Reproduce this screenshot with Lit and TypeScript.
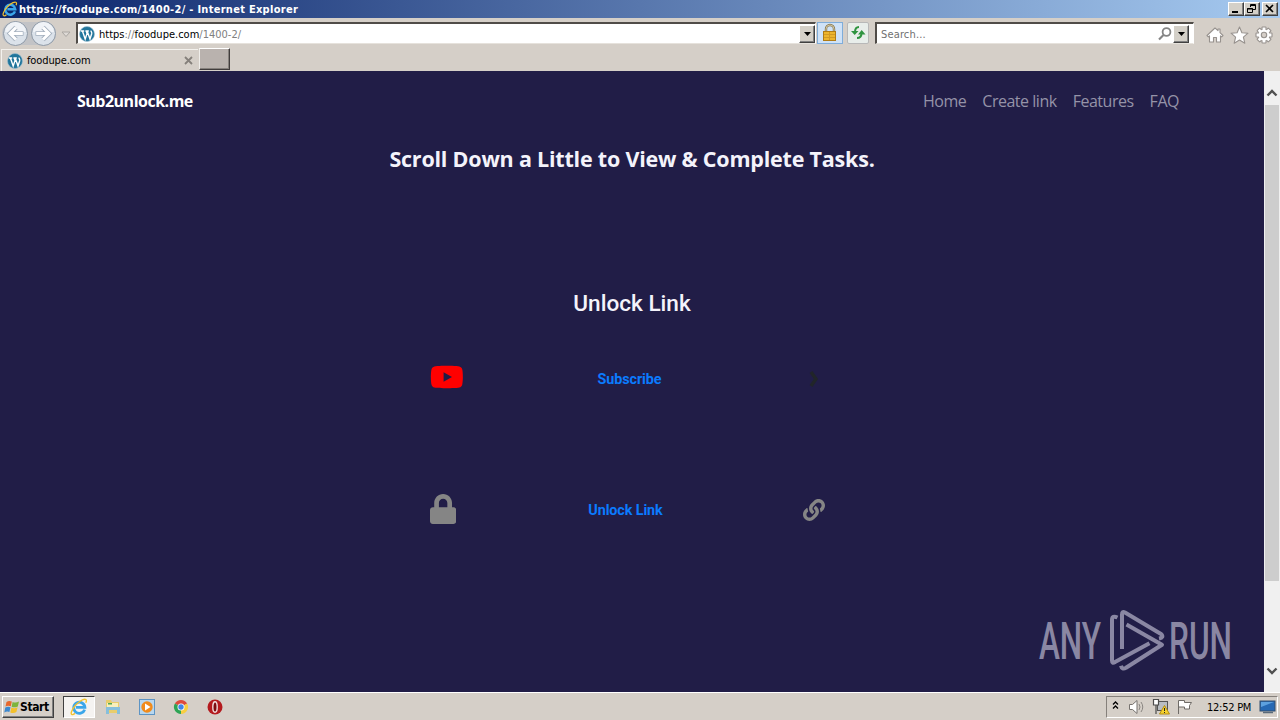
import { LitElement, html, svg, css } from "lit";
import { customElement, state } from "lit/decorators.js";

const wordpress = html`
  <svg class="wp" viewBox="0 0 16 16" width="16" height="16">
    <circle cx="8" cy="8" r="7.500" fill="#21759b" />
    <circle cx="8" cy="8" r="7.500" fill="none" stroke="#9cc0d2" stroke-width="0.600" />
    <path
      d="M1.800 5h3.400M6.400 5h3.400M3.400 5l2.800 8L8 7.600 7.200 5M8.200 5l2.800 8 1.700-5.200c.4-1.400-.6-2.200-.9-3.200"
      fill="none"
      stroke="#fff"
      stroke-width="1.400"
    />
  </svg>
`;

const explorer = (size: number) => html`
  <svg viewBox="0 0 18 18" width=${size} height=${size}>
    <path
      d="M14.600 11.600A5.600 5.600 0 1 1 14.900 9.400H6"
      fill="none"
      stroke="#3ba6ea"
      stroke-width="2.800"
    />
    <path
      d="M5 15.400C2.600 17.400.6 17 1.400 14 2.400 10 7.600 4 12.400 1.800c3.400-1.400 4.800-.2 3.400 3"
      fill="none"
      stroke="#f2c230"
      stroke-width="1.400"
    />
  </svg>
`;

@customElement("title-bar")
export class TitleBar extends LitElement {
  static styles = css`
    :host {
      display: flex;
      align-items: center;
      height: 18px;
      padding: 0 2px;
      box-sizing: border-box;
      background: linear-gradient(90deg, #0a246a, #a6caf0);
      color: #fff;
      font: bold 11px "DejaVu Sans Condensed", "DejaVu Sans", sans-serif;
    }
    svg {
      display: block;
    }
    .title {
      flex: 1;
      margin-left: 1px;
      letter-spacing: 0.28px;
      white-space: nowrap;
    }
    .buttons {
      display: flex;
    }
    .button {
      width: 16px;
      height: 14px;
      box-sizing: border-box;
      background: #d4d0c8;
      border: 1px solid;
      border-color: #fff #404040 #404040 #fff;
      box-shadow: inset -1px -1px #808080;
    }
    .close {
      margin-left: 2px;
    }
  `;

  render() {
    return html`
      ${explorer(16)}
      <span class="title">https://foodupe.com/1400-2/ - Internet Explorer</span>
      <div class="buttons">
        <div class="button">
          <svg viewBox="0 0 13 12" width="13" height="12">
            <path d="M3 9h6" stroke="#000" stroke-width="2" />
          </svg>
        </div>
        <div class="button">
          <svg viewBox="0 0 13 12" width="13" height="12">
            <path
              d="M5.500 4V1.500h5v5H8M5 2.500h6M2.500 5.500h5v4h-5zM2 6h6"
              fill="none"
              stroke="#000"
            />
          </svg>
        </div>
        <div class="button close">
          <svg viewBox="0 0 13 12" width="13" height="12">
            <path d="M3 2l7 7M10 2L3 9" stroke="#000" stroke-width="1.600" />
          </svg>
        </div>
      </div>
    `;
  }
}

@customElement("browser-bar")
export class BrowserBar extends LitElement {
  static styles = css`
    :host {
      display: block;
      height: 53px;
      background: #d5cfc8;
      color: #000;
      font: 11px "DejaVu Sans Condensed", "DejaVu Sans", sans-serif;
    }
    svg {
      display: block;
      flex: none;
    }
    .toolbar {
      display: flex;
      align-items: center;
      height: 30px;
      padding: 0 7px 0 0;
      box-sizing: border-box;
    }
    .nav {
      width: 76px;
      height: 30px;
    }
    .field {
      display: flex;
      align-items: center;
      height: 22px;
      box-sizing: border-box;
      background: #fff;
      border: 2px solid;
      border-color: #504c48 #fff #e6e2dc #504c48;
      border-width: 2px 1px 1px 2px;
    }
    .field .text {
      flex: 1;
      padding-top: 1px;
    }
    .address {
      width: 740px;
      padding-left: 1px;
    }
    .address .text {
      margin-left: 4px;
      color: #808080;
    }
    .address b {
      font-weight: normal;
      color: #000;
    }
    .drop {
      display: flex;
      align-items: center;
      justify-content: center;
      width: 16px;
      height: 18px;
      box-sizing: border-box;
      background: #d4d0c8;
      border: 1px solid;
      border-color: #fff #404040 #404040 #fff;
      box-shadow: inset -1px -1px #808080;
    }
    .secure {
      width: 24px;
      height: 20px;
      margin-left: 1px;
      background: #cfe2f7;
      border: 1px solid #7fadda;
    }
    .refresh {
      width: 20px;
      height: 20px;
      margin-left: 4px;
      background: #e8edea;
      border: 1px solid #b8b8b8;
      border-radius: 2px;
    }
    .search {
      width: 319px;
      margin-left: 6px;
      padding: 0 4px;
    }
    .search .text {
      color: #707070;
      letter-spacing: 0.15px;
    }
    .tabs {
      display: flex;
      height: 23px;
    }
    .tab {
      display: flex;
      align-items: center;
      width: 197px;
      height: 22px;
      margin: 1px 0 0 1px;
      padding: 0 5px;
      box-sizing: border-box;
      border-top: 1px solid #f4f2ee;
      border-left: 1px solid #f4f2ee;
    }
    .tab .text {
      flex: 1;
      margin-left: 4px;
      letter-spacing: -0.12px;
    }
    .new-tab {
      width: 31px;
      height: 22px;
      margin-left: 1px;
      box-sizing: border-box;
      background: #b9b2ae;
      border: 1px solid;
      border-color: #fff #403c3c #403c3c #f0eeea;
      box-shadow: inset -1px -1px #85807c;
    }
  `;

  render() {
    const arrow = html`
      <div class="drop">
        <svg viewBox="0 0 7 4" width="7" height="4"><path d="M0 0h7L3.500 4z" /></svg>
      </div>
    `;
    return html`
      <div class="toolbar">
        <svg class="nav" viewBox="0 0 76 30">
          <rect x="2" y="4" width="54" height="23" rx="11" fill="#c2c3c6" />
          <circle cx="15.500" cy="15.500" r="12" fill="#dbe2ea" stroke="#8e99a6" />
          <circle cx="43.500" cy="15.500" r="12" fill="#dbe2ea" stroke="#8e99a6" />
          <path d="M5 14a10.500 10 0 0 1 21 0zM33 14a10.500 10 0 0 1 21 0z" fill="#f0f3f7" />
          <path
            d="M23.500 15.500H10M16 9.500l-6 6 6 6M35.500 15.500H49M43 9.500l6 6-6 6"
            fill="none"
            stroke="#a3afbd"
            stroke-width="4.600"
          />
          <path
            d="M22.800 15.500H10M16 9.500l-6 6 6 6M36.200 15.500H49M43 9.500l6 6-6 6"
            fill="none"
            stroke="#fff"
            stroke-width="3"
          />
          <path d="M62 14h8l-4 4.500z" fill="#dedad6" stroke="#aaa6a2" />
        </svg>
        <div class="field address">
          ${wordpress}
          <span class="text"><b>https</b>://<b>foodupe.com</b>/1400-2/</span>
          ${arrow}
        </div>
        <div class="secure">
          <svg viewBox="0 0 24 20" width="24" height="20">
            <path d="M8 9V6a4 4 0 0 1 8 0v3" fill="none" stroke="#8a7a50" stroke-width="2.400" />
            <path d="M8 9V6a4 4 0 0 1 8 0v3" fill="none" stroke="#e0d6b4" stroke-width="0.800" />
            <rect x="5.500" y="8.500" width="12" height="9" fill="#edb52d" stroke="#b07c16" />
            <path d="M6 11.500h11M6 14.500h11M11.500 9v8" stroke="#d29a24" />
          </svg>
        </div>
        <div class="refresh">
          <svg viewBox="0 0 20 20" width="20" height="20">
            <path
              d="M11 4Q7 4 7 9M9 15q4.500 0 4.500-5"
              fill="none"
              stroke="#2f9440"
              stroke-width="2"
            />
            <path d="M3 8h7.500L6.700 12zM10 11.500h7.500L13.700 7z" fill="#2f9440" />
          </svg>
        </div>
        <div class="field search">
          <span class="text">Search...</span>
          <svg viewBox="0 0 16 16" width="16" height="16">
            <circle cx="9.500" cy="6" r="3.900" fill="none" stroke="#858585" stroke-width="1.800" />
            <path d="M6.500 9L2 13.500" stroke="#858585" stroke-width="2.200" />
          </svg>
          ${arrow}
        </div>
        <svg viewBox="0 0 79 30" width="79" height="30">
          <g fill="#fff" stroke="#97928e" stroke-width="1.100" stroke-linejoin="round">
            <path
              d="M13 17.500L21 10l3 2.700V11h2v3.700l3 2.800-1.300 1.300-1.200-1V24h-4v-4.500h-3V24h-4v-6.200l-1.200 1z"
            />
            <path
              d="M45.500 9l2.400 5.700 6.100.5-4.600 4 1.400 6-5.300-3.200-5.300 3.200 1.400-6-4.600-4 6.100-.5z"
            />
            ${[0, 45, 90, 135].map(
              (a) => svg`<rect x="68" y="9" width="4" height="16" rx="0.500" transform="rotate(${a} 70 17)" />`
            )}
            <circle cx="70" cy="17" r="5.500" stroke="none" />
            <circle cx="70" cy="17" r="2.700" fill="#d5cfc8" />
          </g>
        </svg>
      </div>
      <div class="tabs">
        <div class="tab">
          ${wordpress}
          <span class="text">foodupe.com</span>
          <svg viewBox="0 0 9 9" width="9" height="9">
            <path d="M1 1l7 7M8 1L1 8" stroke="#85807b" stroke-width="1.800" />
          </svg>
        </div>
        <div class="new-tab"></div>
      </div>
    `;
  }
}

@customElement("unlock-page")
export class UnlockPage extends LitElement {
  static styles = css`
    :host {
      position: relative;
      display: block;
      flex: 1;
      background: #211d47;
      font-family: "Open Sans", "Noto Sans", sans-serif;
    }
    svg {
      display: block;
    }
    header {
      display: flex;
      align-items: center;
      justify-content: space-between;
      height: 59px;
      padding: 0 85px 0 77px;
    }
    .brand {
      color: #fff;
      font-size: 16px;
      font-weight: 700;
      letter-spacing: -0.5px;
    }
    nav {
      display: flex;
      gap: 16px;
      color: #9593a8;
      font-size: 16px;
      letter-spacing: -0.48px;
    }
    h1,
    h2 {
      margin: 0;
      color: #f4f3fb;
      text-align: center;
    }
    h1 {
      margin-top: 13px;
      font-size: 21.500px;
      line-height: 32px;
      font-weight: 700;
      letter-spacing: -0.21px;
    }
    h2 {
      margin-top: 113px;
      font: 500 22.600px/32px Roboto, sans-serif;
    }
    .task {
      display: grid;
      grid-template-columns: 34px 1fr 23px;
      align-items: center;
      width: 396px;
      height: 32px;
      margin-left: 430px;
      color: #0b7bff;
      font: 700 14.400px Roboto, sans-serif;
      letter-spacing: -0.12px;
      text-align: center;
    }
    .subscribe {
      margin-top: 41px;
    }
    .subscribe span {
      padding: 4px 8px 0 0;
    }
    .unlock {
      margin-top: 100px;
    }
    .unlock span {
      padding: 2px 16px 0 0;
    }
    .chevron {
      margin-top: 4px;
    }
    .chain {
      margin-top: 1px;
    }
    .watermark {
      position: absolute;
      left: 1026px;
      top: 526px;
    }
  `;

  @state()
  private declare links: string[];

  constructor() {
    super();
    this.links = ["Home", "Create link", "Features", "FAQ"];
  }

  render() {
    return html`
      <header>
        <span class="brand">Sub2unlock.me</span>
        <nav>${this.links.map((l) => html`<span>${l}</span>`)}</nav>
      </header>
      <h1>Scroll Down a Little to View &amp; Complete Tasks.</h1>
      <h2>Unlock Link</h2>
      <div class="task subscribe">
        <svg viewBox="0 0 576 512" width="33.75" height="30">
          <path
            fill="#f00"
            d="M549.655 124.083c-6.281-23.65-24.787-42.276-48.284-48.597C458.781 64 288 64 288 64S117.22 64 74.629 75.486c-23.497 6.322-42.003 24.947-48.284 48.597-11.412 42.867-11.412 132.305-11.412 132.305s0 89.438 11.412 132.305c6.281 23.65 24.787 41.5 48.284 47.821C117.22 448 288 448 288 448s170.78 0 213.371-11.486c23.497-6.321 42.003-24.171 48.284-47.821 11.412-42.867 11.412-132.305 11.412-132.305s0-89.438-11.412-132.305zm-317.51 213.508V175.185l142.739 81.205-142.739 81.201z"
          />
        </svg>
        <span>Subscribe</span>
        <svg class="chevron" viewBox="0 0 22 22" width="22" height="22">
          <path d="M8 4l5 7-5 7" fill="none" stroke="#212529" stroke-width="3.400" />
        </svg>
      </div>
      <div class="task unlock">
        <svg viewBox="0 0 448 512" width="26.25" height="30">
          <path
            fill="#858585"
            d="M400 224h-24v-72C376 68.2 307.8 0 224 0S72 68.2 72 152v72H48c-26.5 0-48 21.5-48 48v192c0 26.500 21.500 48 48 48h352c26.500 0 48-21.500 48-48V272c0-26.500-21.500-48-48-48zm-104 0H152v-72c0-39.700 32.300-72 72-72s72 32.300 72 72v72z"
          />
        </svg>
        <span>Unlock Link</span>
        <svg class="chain" viewBox="0 0 512 512" width="22" height="22">
          <path
            fill="#858585"
            d="M326.612 185.391c59.747 59.809 58.927 155.698.36 214.59-.11.12-.24.25-.36.37l-67.2 67.2c-59.27 59.27-155.699 59.262-214.96 0-59.27-59.26-59.27-155.7 0-214.96l37.106-37.106c9.84-9.84 26.786-3.3 27.294 10.606.648 17.722 3.826 35.527 9.69 52.721 1.986 5.822.567 12.262-3.783 16.612l-13.087 13.087c-28.026 28.026-28.905 73.66-1.155 101.96 28.024 28.579 74.086 28.749 102.325.51l67.2-67.19c28.191-28.191 28.073-73.757 0-101.83-3.701-3.694-7.429-6.564-10.341-8.569a16.037 16.037 0 0 1-6.947-12.606c-.396-10.567 3.348-21.456 11.698-29.806l21.054-21.055c5.521-5.521 14.182-6.199 20.584-1.731a152.482 152.482 0 0 1 20.522 17.197zM467.547 44.449c-59.261-59.262-155.69-59.27-214.96 0l-67.2 67.2c-.12.12-.25.25-.36.37-58.566 58.892-59.387 154.781.36 214.59a152.454 152.454 0 0 0 20.521 17.196c6.402 4.468 15.064 3.789 20.584-1.731l21.054-21.055c8.35-8.35 12.094-19.239 11.698-29.806a16.037 16.037 0 0 0-6.947-12.606c-2.912-2.005-6.64-4.875-10.341-8.569-28.073-28.073-28.191-73.639 0-101.83l67.2-67.19c28.239-28.239 74.3-28.069 102.325.51 27.75 28.3 26.872 73.934-1.155 101.96l-13.087 13.087c-4.35 4.35-5.769 10.79-3.783 16.612 5.864 17.194 9.042 34.999 9.69 52.721.509 13.906 17.454 20.446 27.294 10.606l37.106-37.106c59.271-59.259 59.271-155.699.001-214.959z"
          />
        </svg>
      </div>
      <svg class="watermark" viewBox="-10 -10 220 90" width="220" height="90">
        <g fill="#8a87a3" font-family="Roboto, sans-serif" font-size="38" font-weight="500">
          <text transform="translate(3 52) scale(1 1.360)" textLength="62" lengthAdjust="spacingAndGlyphs">ANY</text>
          <text transform="translate(133 52) scale(1 1.360)" textLength="63" lengthAdjust="spacingAndGlyphs">RUN</text>
        </g>
        <path
          d="M86 42V7.500Q86 4 89 5.500L125 27Q128.500 30.500 123 31.500M90.500 17.500L126 37.800 90 60.800Q86 63 85 58.700M81.500 10.500Q76 8 76 13V53.500Q76 57 79 55L113.500 36.300"
          fill="none"
          stroke="#8a87a3"
          stroke-width="4"
          stroke-linejoin="round"
        />
      </svg>
    `;
  }
}

@customElement("task-bar")
export class TaskBar extends LitElement {
  static styles = css`
    :host {
      display: flex;
      align-items: center;
      height: 28px;
      padding: 1px 2px 0;
      box-sizing: border-box;
      border-top: 1px solid #fff;
      background: #d5cfc8;
      font: 11px "DejaVu Sans Condensed", "DejaVu Sans", sans-serif;
    }
    svg {
      display: block;
      flex: none;
    }
    .start {
      display: flex;
      align-items: center;
      width: 52px;
      height: 22px;
      padding-left: 1px;
      box-sizing: border-box;
      border: 1px solid;
      border-color: #fff #404040 #404040 #fff;
      box-shadow: inset -1px -1px #808080;
      font-weight: bold;
      font-size: 12px;
      letter-spacing: -0.4px;
    }
    .active {
      display: flex;
      align-items: center;
      justify-content: center;
      width: 32px;
      height: 22px;
      margin-left: 9px;
      box-sizing: border-box;
      background: #f5f3f1;
      border: 1px solid;
      border-color: #404040 #fff #fff #404040;
    }
    .pins {
      display: flex;
      gap: 18px;
      margin-left: 10px;
    }
    .tray {
      display: flex;
      align-items: center;
      width: 172px;
      height: 22px;
      margin-left: auto;
      box-sizing: border-box;
      border: 1px solid;
      border-color: #85807b #fff #fff #85807b;
    }
    .clock {
      flex: 1;
      margin-left: 14px;
      letter-spacing: -0.25px;
      white-space: nowrap;
    }
  `;

  render() {
    return html`
      <div class="start">
        <svg viewBox="0 0 16 16" width="16" height="16">
          <path d="M2.500 3Q5 1 7.800 2.600L6.800 7.300Q4 6 1.500 7.600z" fill="#e8682c" />
          <path d="M8.600 3Q11.500 4.400 15 2.600L13.800 7.400Q10.500 9 7.600 7.800z" fill="#7db43c" />
          <path d="M1.300 8.500Q4 7 6.500 8.200L5.400 13Q3 12 .3 13.400z" fill="#3c88cf" />
          <path d="M7.400 8.600Q10.500 10 13.600 8.300L12.400 13Q9.500 15 6.300 13.400z" fill="#f3c02c" />
        </svg>
        <span>Start</span>
      </div>
      <div class="active">${explorer(18)}</div>
      <div class="pins">
        <svg viewBox="0 0 16 16" width="16" height="16">
          <path d="M1 1h5l1 2h7v11H1z" fill="#e8cd6c" />
          <path d="M2 4h11v4H2z" fill="#f8efbc" />
          <path d="M3 4h4v1.500H3z" fill="#52a852" />
          <path d="M1 8h14v7H12v-4H4v4H1z" fill="#86bfdc" />
        </svg>
        <svg viewBox="0 0 16 16" width="16" height="16">
          <rect x="0.500" y="0.500" width="15" height="15" fill="#b8d7ef" stroke="#5d94c4" />
          <circle cx="8" cy="8" r="5.700" fill="#f18b1c" />
          <path d="M6 4.500l5.500 3.500L6 11.500z" fill="#fff" />
        </svg>
        <svg viewBox="0 0 16 16" width="16" height="16">
          <path d="M8 8L1.900 4.500A7 7 0 0 1 14.100 4.500z" fill="#de4a3c" />
          <path d="M8 8L1.900 4.500A7 7 0 0 0 8 15z" fill="#2ea455" />
          <path d="M8 8L14.100 4.500A7 7 0 0 1 8 15z" fill="#f8ce41" />
          <circle cx="8" cy="8" r="3.500" fill="#fff" />
          <circle cx="8" cy="8" r="2.700" fill="#4285e8" />
        </svg>
        <svg viewBox="0 0 16 16" width="16" height="16">
          <circle cx="8" cy="8" r="7.500" fill="#b41a1e" />
          <ellipse cx="8" cy="8" rx="2.200" ry="5.200" fill="#7c0c10" stroke="#f0dcdc" stroke-width="1.400" />
        </svg>
      </div>
      <div class="tray">
        <svg viewBox="0 0 86 20" width="86" height="20">
          <path
            d="M6 7.500l2.500-2.500L11 7.500M6 11.500l2.500-2.500 2.500 2.500"
            fill="none"
            stroke="#000"
            stroke-width="1.300"
          />
          <path d="M22.500 7.500h3L30 3.500v13l-4.500-4h-3z" fill="#fff" stroke="#77736f" />
          <path d="M32 7q2 3 0 6M34 5q3.500 5 0 10" fill="none" stroke="#8a8682" />
          <rect x="50.500" y="4.500" width="10" height="9" fill="#b9bdc2" stroke="#555" />
          <path d="M46.500 2.500h5v5.500h-5zM49 8v9" fill="#fff" stroke="#4c4c4c" stroke-width="1.200" />
          <path d="M57.500 8.500l5 8.500h-10z" fill="#f6d22f" stroke="#b58d10" />
          <path d="M57.500 11v3M57.500 15v1" stroke="#222" />
          <path
            d="M71.500 17V3.500h6v2h7l-2 3 0 3.500h-5v-2h-6"
            fill="#fff"
            stroke="#6f6b67"
          />
        </svg>
        <span class="clock">12:52 PM</span>
        <svg viewBox="0 0 18 16" width="18" height="16">
          <rect x="1" y="2" width="15" height="10" fill="#2669b4" stroke="#334e6c" />
          <path d="M2 3h13L2 8z" fill="#5da1df" />
          <path d="M4 13.500h10" stroke="#5a6a7a" stroke-width="1.500" />
        </svg>
      </div>
    `;
  }
}

@customElement("app-root")
export class AppRoot extends LitElement {
  static styles = css`
    :host {
      display: flex;
      flex-direction: column;
      width: 1280px;
      height: 720px;
      overflow: hidden;
    }
    .viewport {
      display: flex;
      flex: 1;
    }
    .scrollbar {
      display: flex;
      flex-direction: column;
      width: 16px;
      background: #f0f0f0;
    }
    .thumb {
      height: 476px;
      margin: 0 1px;
      background: #cdcdcd;
    }
    .scrollbar svg {
      display: block;
      fill: none;
      stroke: #505050;
      stroke-width: 2.4px;
    }
    .down {
      margin-top: 80px;
    }
  `;

  render() {
    return html`
      <title-bar></title-bar>
      <browser-bar></browser-bar>
      <div class="viewport">
        <unlock-page></unlock-page>
        <div class="scrollbar">
          <svg viewBox="0 0 16 34" width="16" height="34"><path d="M3.500 24.500L8 20l4.500 4.500" /></svg>
          <div class="thumb"></div>
          <svg class="down" viewBox="0 0 16 24" width="16" height="24">
            <path d="M3.500 7.500L8 12l4.500-4.500" />
          </svg>
        </div>
      </div>
      <task-bar></task-bar>
    `;
  }
}
